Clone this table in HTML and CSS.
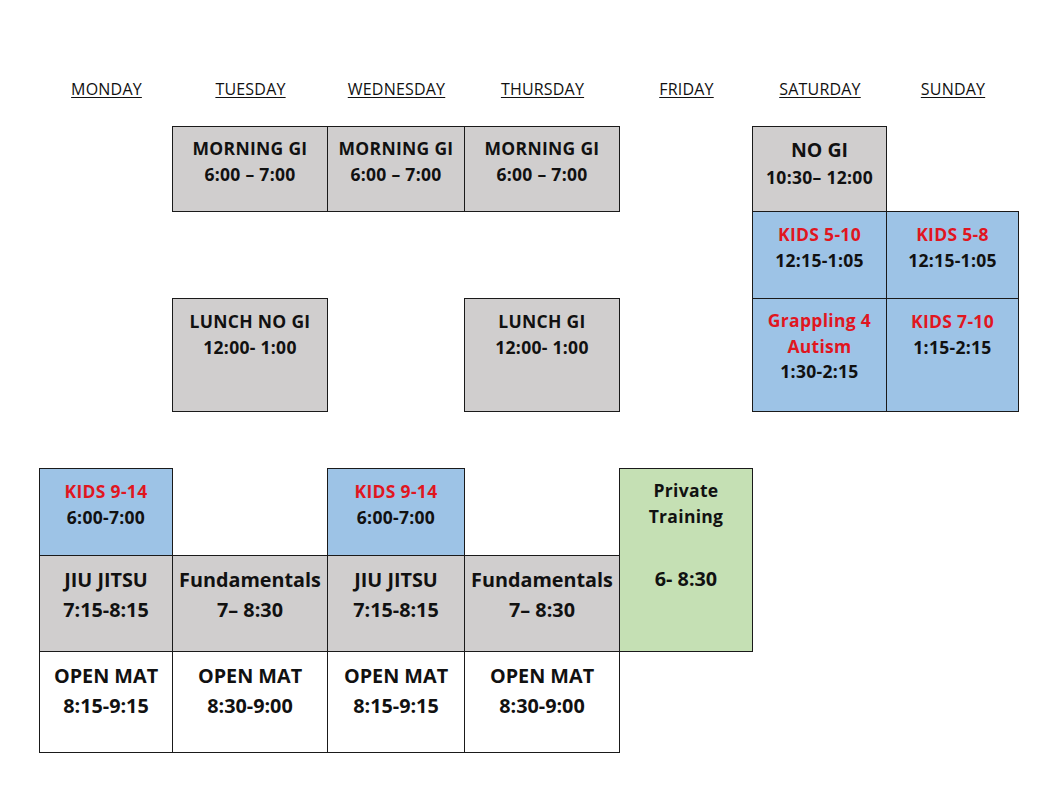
FILE: index.html
```html
<!DOCTYPE html>
<html lang="en">
<head>
<meta charset="utf-8">
<title>Class Schedule</title>
<link rel="stylesheet" href="styles.css">
</head>
<body>
<div class="schedule">
  <div class="day c1">MONDAY</div>
  <div class="day c2">TUESDAY</div>
  <div class="day c3">WEDNESDAY</div>
  <div class="day c4">THURSDAY</div>
  <div class="day c5">FRIDAY</div>
  <div class="day c6">SATURDAY</div>
  <div class="day c7">SUNDAY</div>

  <div class="cell gray c2 r2"><p>MORNING GI</p><p>6:00 – 7:00</p></div>
  <div class="cell gray c3 r2"><p>MORNING GI</p><p>6:00 – 7:00</p></div>
  <div class="cell gray c4 r2"><p>MORNING GI</p><p>6:00 – 7:00</p></div>
  <div class="cell gray c6 r2 nogi"><p class="big">NO GI</p><p>10:30– 12:00</p></div>

  <div class="cell blue c6 r3"><p class="red">KIDS 5-10</p><p>12:15-1:05</p></div>
  <div class="cell blue c7 r3"><p class="red">KIDS 5-8</p><p>12:15-1:05</p></div>

  <div class="cell gray c2 r4"><p>LUNCH NO GI</p><p>12:00- 1:00</p></div>
  <div class="cell gray c4 r4"><p>LUNCH GI</p><p>12:00- 1:00</p></div>
  <div class="cell blue c6 r4 tight"><p class="red">Grappling 4</p><p class="red">Autism</p><p>1:30-2:15</p></div>
  <div class="cell blue c7 r4"><p class="red">KIDS 7-10</p><p>1:15-2:15</p></div>

  <div class="cell blue c1 r6"><p class="red">KIDS 9-14</p><p>6:00-7:00</p></div>
  <div class="cell blue c3 r6"><p class="red">KIDS 9-14</p><p>6:00-7:00</p></div>
  <div class="cell green c5 r67"><p>Private</p><p>Training</p><p class="private-time">6- 8:30</p></div>

  <div class="cell gray c1 r7 large"><p>JIU JITSU</p><p>7:15-8:15</p></div>
  <div class="cell gray c2 r7 large"><p>Fundamentals</p><p>7– 8:30</p></div>
  <div class="cell gray c3 r7 large"><p>JIU JITSU</p><p>7:15-8:15</p></div>
  <div class="cell gray c4 r7 large"><p>Fundamentals</p><p>7– 8:30</p></div>

  <div class="cell white c1 r8 large"><p>OPEN MAT</p><p>8:15-9:15</p></div>
  <div class="cell white c2 r8 large"><p>OPEN MAT</p><p>8:30-9:00</p></div>
  <div class="cell white c3 r8 large"><p>OPEN MAT</p><p>8:15-9:15</p></div>
  <div class="cell white c4 r8 large"><p>OPEN MAT</p><p>8:30-9:00</p></div>
</div>
</body>
</html>
```
FILE: styles.css
```css
* { box-sizing: border-box; }
html, body { margin: 0; padding: 0; background: #fff; }
body {
  font-family: "Open Sans", Lato, "Liberation Sans", sans-serif;
  color: #111;
  width: 1053px;
  height: 811px;
  overflow: hidden;
}
.schedule {
  display: grid;
  grid-template-columns: 133px 155px 137px 155px 133px 134px 132px;
  grid-template-rows: 48px 85px 87px 113px 57px 87px 96px 101px;
  margin: 79px 0 0 40px;
}
.day {
  grid-row: 1;
  text-align: center;
  font-size: 16px;
  letter-spacing: 0.2px;
  line-height: 20px;
  text-decoration: underline;
  text-underline-offset: 2px;
  text-decoration-thickness: 1px;
}
.c1 { grid-column: 1; }
.c2 { grid-column: 2; }
.c3 { grid-column: 3; }
.c4 { grid-column: 4; }
.c5 { grid-column: 5; }
.c6 { grid-column: 6; }
.c7 { grid-column: 7; }
.r2 { grid-row: 2; }
.r3 { grid-row: 3; }
.r4 { grid-row: 4; }
.r6 { grid-row: 6; }
.r7 { grid-row: 7; }
.r8 { grid-row: 8; }
.r67 { grid-row: 6 / span 2; }

.cell {
  margin: -1px 0 0 -1px;
  border: 1px solid #1a1a1a;
  text-align: center;
  font-weight: 700;
  font-size: 17.5px;
  letter-spacing: 0.3px;
  line-height: 26px;
  padding-top: 8px;
}
.cell p { margin: 0; white-space: nowrap; }
.gray { background: #d0cece; }
.blue { background: #9dc3e6; }
.green { background: #c5e0b4; }
.white { background: #fff; }
.red { color: #e0161f; }
.big { font-size: 19.5px; line-height: 28px; letter-spacing: 0; }
.nogi { padding-top: 9px; }
.large { font-size: 19.8px; letter-spacing: 0; line-height: 30px; padding-top: 9px; }
.cell .private-time { font-size: 19.8px; letter-spacing: 0; line-height: 30px; margin-top: 35px; }
.tight { line-height: 25.5px; padding-top: 10px; }
.r3, .r6 { padding-top: 9px; }
.r4 { padding-top: 9px; }
```
